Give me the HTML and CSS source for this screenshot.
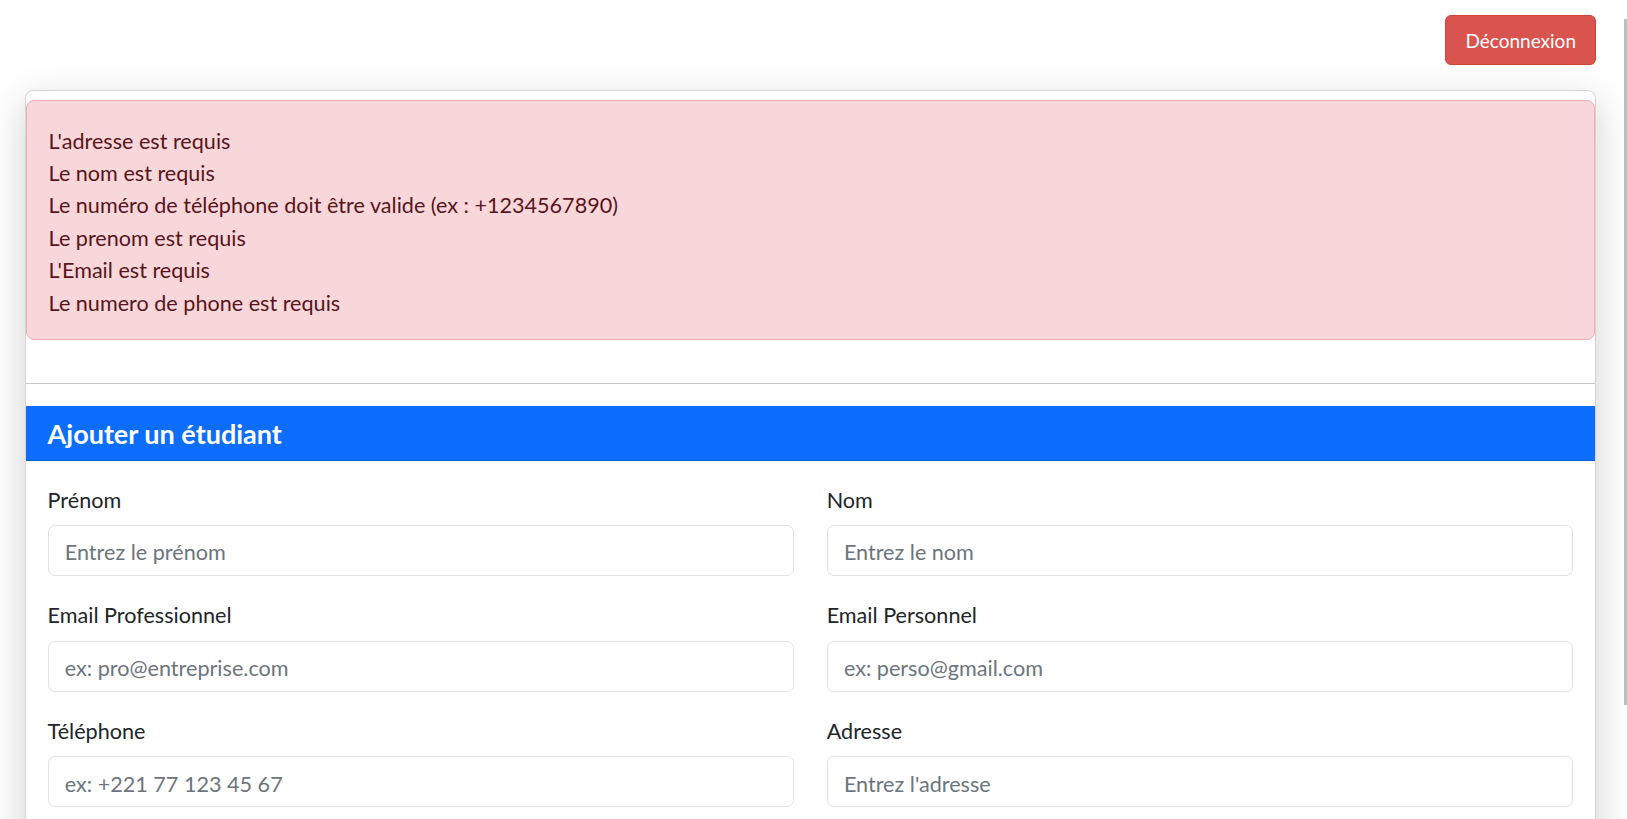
FILE: index.html
```html
<!DOCTYPE html>
<html lang="fr">
<head>
<meta charset="utf-8">
<title>Ajouter un étudiant</title>
<link rel="stylesheet" href="styles.css">
</head>
<body>
<div class="page">
  <header class="topbar">
    <button class="btn-logout" type="button">Déconnexion</button>
  </header>
  <main class="card">
    <div class="alert">
      <div>L'adresse est requis</div>
      <div>Le nom est requis</div>
      <div>Le numéro de téléphone doit être valide (ex : +1234567890)</div>
      <div>Le prenom est requis</div>
      <div>L'Email est requis</div>
      <div>Le numero de phone est requis</div>
    </div>
    <hr class="sep">
    <div class="card-header">
      <h5 class="title">Ajouter un étudiant</h5>
    </div>
    <form class="card-body">
      <div class="row">
        <div class="field">
          <label class="label">Prénom</label>
          <input class="control" type="text" placeholder="Entrez le prénom">
        </div>
        <div class="field">
          <label class="label">Nom</label>
          <input class="control" type="text" placeholder="Entrez le nom">
        </div>
      </div>
      <div class="row">
        <div class="field">
          <label class="label">Email Professionnel</label>
          <input class="control" type="email" placeholder="ex: pro@entreprise.com">
        </div>
        <div class="field">
          <label class="label">Email Personnel</label>
          <input class="control" type="email" placeholder="ex: perso@gmail.com">
        </div>
      </div>
      <div class="row">
        <div class="field">
          <label class="label">Téléphone</label>
          <input class="control" type="text" placeholder="ex: +221 77 123 45 67">
        </div>
        <div class="field">
          <label class="label">Adresse</label>
          <input class="control" type="text" placeholder="Entrez l'adresse">
        </div>
      </div>
    </form>
  </main>
</div>
<div class="scroll-thumb"></div>
</body>
</html>
```

FILE: styles.css
```css
html, body {
  margin: 0;
  padding: 0;
  overflow: hidden;
  background: #ffffff;
}

body {
  font-family: "Segoe UI", Lato, "Noto Sans", sans-serif;
  color: #212529;
  font-size: 21.6px;
  line-height: 1.5;
}

.page {
  padding: 0 31px 40px 25px;
}

.topbar {
  display: flex;
  justify-content: flex-end;
  align-items: flex-start;
  padding-top: 15px;
  height: 90px;
  box-sizing: border-box;
}

.btn-logout {
  height: 50px;
  padding: 0 19px;
  border: 1px solid #d43f3a;
  border-radius: 6px;
  background: #d9534f;
  color: #ffffff;
  font-family: inherit;
  font-size: 19px;
  line-height: 1;
}

.card {
  display: block;
  border: 1px solid #d4d4d4;
  border-radius: 8px;
  background: #ffffff;
  box-shadow: 0 12px 40px rgba(0, 0, 0, 0.19);
  padding-top: 9px;
}

.alert {
  background: #f8d7da;
  border: 1px solid #f1aeb5;
  border-radius: 8px;
  color: #58151c;
  padding: 23.6px 21.6px 19.6px;
  line-height: 32.4px;
}

.sep {
  margin: 43px 0 22px;
  border: 0;
  border-top: 1px solid #c8c8c8;
}

.card-header {
  background: #0d6efd;
  border-bottom: 1px solid #0b5ed7;
  padding: 12.8px 21.6px 8.8px;
}

.title {
  margin: 0;
  color: #ffffff;
  font-size: 27px;
  font-weight: 700;
  line-height: 32.4px;
}

.card-body {
  padding: 21px 21.6px 21.6px;
}

.row {
  display: grid;
  grid-template-columns: 1fr 1fr;
  column-gap: 32.4px;
  margin-bottom: 21.6px;
}

.field {
  display: flex;
  flex-direction: column;
}

.label {
  line-height: 32.4px;
  padding-top: 2px;
  margin-bottom: 8.8px;
}

.control {
  box-sizing: border-box;
  height: 51px;
  padding: 10px 16.2px 6px;
  border: 1px solid #dee2e6;
  border-radius: 7px;
  font-family: inherit;
  font-size: 21.6px;
  color: #212529;
  background: #ffffff;
}

.control::placeholder {
  color: #6c757d;
  opacity: 1;
}

.scroll-thumb {
  position: fixed;
  top: 19px;
  right: 0;
  width: 3px;
  height: 686px;
  background: #bdbdbd;
}
```
